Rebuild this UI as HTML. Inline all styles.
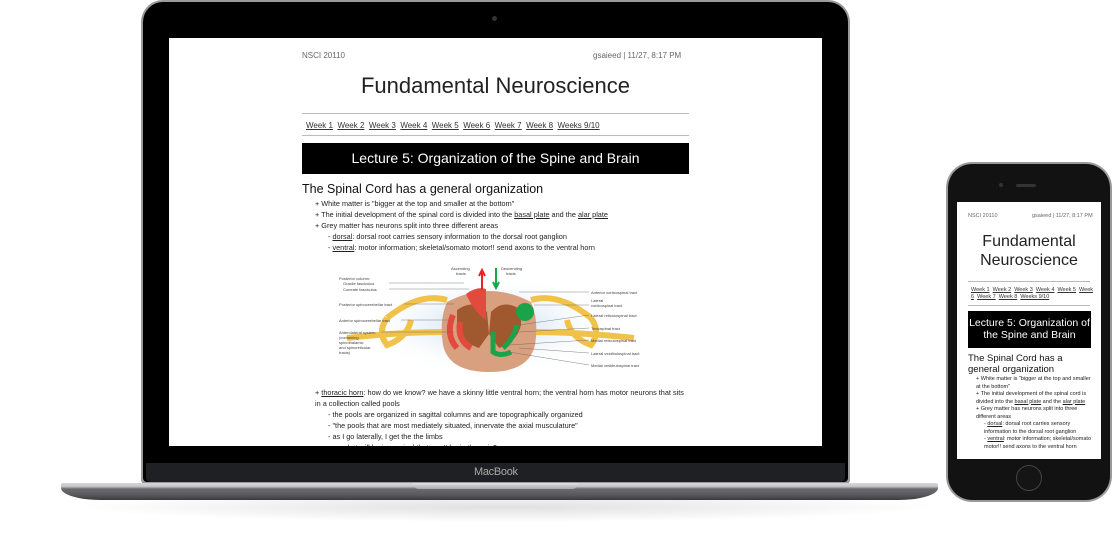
<!DOCTYPE html>
<html><head><meta charset="utf-8"><style>
*{margin:0;padding:0;box-sizing:border-box}
body{width:1113px;height:555px;background:#fff;position:relative;overflow:hidden;font-family:"Liberation Sans",sans-serif;color:#222}
.a{position:absolute}
.t{position:absolute;white-space:nowrap}
u{text-decoration:underline}
</style></head><body>
<!-- laptop shadow -->
<div class="a" style="left:70px;top:492px;width:870px;height:30px;background:radial-gradient(ellipse at center,rgba(0,0,0,.12),rgba(0,0,0,0) 70%)"></div>
<!-- lid -->
<div class="a" style="left:141px;top:0;width:709px;height:484px;background:#9a9a9c;border-radius:22px 22px 4px 4px"></div>
<div class="a" style="left:143px;top:2px;width:705px;height:480px;background:#000;border-radius:20px 20px 4px 4px"></div>
<div class="a" style="left:146px;top:463px;width:699px;height:19px;background:#1f2023;border-radius:0 0 5px 5px"></div>
<div class="t" style="left:474px;top:466px;font-size:11px;color:#aaa;letter-spacing:-.3px">MacBook</div>
<div class="a" style="left:492px;top:16px;width:5px;height:5px;border-radius:50%;background:#333"></div>
<!-- base -->
<div class="a" style="left:61px;top:483px;width:877px;height:17px;border-radius:2px 2px 40px 40px/2px 2px 12px 12px;background:linear-gradient(#d6d6d8 0,#c7c7c9 20%,#6a6a6d 35%,#5a5a5d 70%,#3a3a3c 100%)"></div>
<div class="a" style="left:413px;top:483px;width:165px;height:6px;background:linear-gradient(#e4e4e6,#a8a8aa);border-radius:0 0 6px 6px"></div>
<!-- screen -->
<div class="a" style="left:169px;top:38px;width:653px;height:408px;background:#fff;overflow:hidden">
 <div class="t" style="left:133px;top:13px;font-size:8px;color:#666">NSCI 20110</div>
 <div class="t" style="left:424px;top:13px;font-size:8px;color:#666">gsaieed | 11/27, 8:17 PM</div>
 <div class="t" style="left:133px;top:35px;width:387px;text-align:center;font-size:22px;color:#222">Fundamental Neuroscience</div>
 <div class="a" style="left:133px;top:75px;width:387px;height:1px;background:#bbb"></div>
 <div class="t" style="left:137px;top:83px;font-size:8px;word-spacing:0;color:#333"><u>Week 1</u>&nbsp; <u>Week 2</u>&nbsp; <u>Week 3</u>&nbsp; <u>Week 4</u>&nbsp; <u>Week 5</u>&nbsp; <u>Week 6</u>&nbsp; <u>Week 7</u>&nbsp; <u>Week 8</u>&nbsp; <u>Weeks 9/10</u></div>
 <div class="a" style="left:133px;top:97px;width:387px;height:1px;background:#bbb"></div>
 <div class="a" style="left:133px;top:105px;width:387px;height:31px;background:#000;color:#fff;font-size:14px;text-align:center;line-height:31px">Lecture 5: Organization of the Spine and Brain</div>
 <div class="t" style="left:133px;top:144px;font-size:12.5px;color:#111">The Spinal Cord has a general organization</div>
 <div style="position:absolute;left:146px;top:160px;font-size:7.3px;line-height:11px;color:#222">
  <div>+ White matter is "bigger at the top and smaller at the bottom"</div>
  <div>+ The initial development of the spinal cord is divided into the <u>basal plate</u> and the <u>alar plate</u></div>
  <div>+ Grey matter has neurons split into three different areas</div>
  <div style="padding-left:13px">- <u>dorsal</u>: dorsal root carries sensory information to the dorsal root ganglion</div>
  <div style="padding-left:13px">- <u>ventral</u>: motor information; skeletal/somato motor!! send axons to the ventral horn</div>
 </div>
 <!-- diagram -->
 <svg class="a" style="left:160px;top:222px" width="330" height="120" viewBox="0 0 330 120">
  <defs><radialGradient id="bg" cx=".5" cy=".5" r=".5"><stop offset="0" stop-color="#bcd6ee"/><stop offset="1" stop-color="#fff" stop-opacity="0"/></radialGradient></defs>
  <ellipse cx="160" cy="65" rx="130" ry="50" fill="url(#bg)"/>
  <path d="M58 58 Q90 32 118 40 M58 58 Q48 72 58 85 Q78 78 82 60 M18 78 Q70 72 118 72 M202 40 Q230 32 262 58 M262 58 Q272 72 262 85 Q242 78 238 60 M202 72 Q250 72 305 78" stroke="#f1c24a" stroke-width="6" fill="none"/>
  <path d="M118 42 Q160 20 202 42 Q210 60 206 85 Q200 112 160 112 Q120 112 114 85 Q110 60 118 42 Z" fill="#d9a07f"/>
  <path d="M128 50 Q145 38 158 52 L160 74 L150 88 Q132 82 128 65Z M192 50 Q175 38 162 52 L160 74 L170 88 Q188 82 192 65Z" fill="#a0582f"/>
  <path d="M137 34 Q148 26 157 29 L157 60 Q145 52 137 34Z" fill="#e24a3e"/>
  <path d="M124 55 Q116 75 128 88 M131 62 Q128 80 142 88" stroke="#e24a3e" stroke-width="6" fill="none"/>
  <circle cx="196" cy="52" r="9" fill="#1ba34a"/>
  <path d="M188 65 Q184 80 174 88 M164 72 L164 92 Q172 97 182 92" stroke="#1ba34a" stroke-width="5" fill="none"/>
  <path d="M153 12 L153 30 M150 16 L153 10 L156 16" stroke="#e22" stroke-width="2" fill="none"/>
  <path d="M167 8 L167 26 M164 22 L167 28 L170 22" stroke="#1a4" stroke-width="2" fill="none"/>
  <g font-size="4" fill="#444" font-family="Liberation Sans,sans-serif">
   <text x="122" y="10">Ascending</text><text x="127" y="15">tracts</text>
   <text x="172" y="10">Descending</text><text x="177" y="15">tracts</text>
   <text x="10" y="20">Posterior column:</text><text x="14" y="25">Gracile fasciculus</text><text x="14" y="31">Cuneate fasciculus</text>
   <text x="10" y="46">Posterior spinocerebellar tract</text><text x="10" y="62">Anterior spinocerebellar tract</text>
   <text x="10" y="74">Anterolateral system</text><text x="10" y="79">(containing</text><text x="10" y="84">spinothalamic</text><text x="10" y="89">and spinoreticular</text><text x="10" y="94">tracts)</text>
   <text x="262" y="34">Anterior corticospinal tract</text><text x="262" y="42">Lateral</text><text x="262" y="47">corticospinal tract</text>
   <text x="262" y="57">Lateral reticulospinal tract</text><text x="262" y="70">Tectospinal tract</text>
   <text x="262" y="82">Medial reticulospinal tract</text><text x="262" y="95">Lateral vestibulospinal tract</text><text x="262" y="107">Medial vestibulospinal tract</text>
  </g>
  <path d="M60 23 L135 23 M60 29 L140 29 M75 44 L125 44 M72 60 L120 60 M52 72 L125 72 M260 32 L190 32 M260 45 L205 45 M260 55 L190 65 M260 68 L190 72 M260 80 L180 85 M260 93 L190 88 M260 105 L180 92" stroke="#666" stroke-width=".4"/>
 </svg>
 <div style="position:absolute;left:146px;top:349px;width:380px;font-size:7.3px;line-height:11px;color:#222">
  <div>+ <u>thoracic horn</u>: how do we know? we have a skinny little ventral horn; the ventral horn has motor neurons that sits</div>
  <div>in a collection called pools</div>
  <div style="padding-left:13px">- the pools are organized in sagittal columns and are topographically organized</div>
  <div style="padding-left:13px">- "the pools that are most mediately situated, innervate the axial musculature"</div>
  <div style="padding-left:13px">- as I go laterally, I get the the limbs</div>
  <div style="padding-left:13px">- so what will be in cervical that won't be in thoracic?</div>
 </div>
</div>
<!-- phone -->
<div class="a" style="left:946px;top:162px;width:166px;height:340px;border-radius:26px;background:#9a9a9c"></div>
<div class="a" style="left:948px;top:164px;width:162px;height:336px;border-radius:24px;background:#121212"></div>
<div class="a" style="left:999px;top:183px;width:4px;height:4px;border-radius:50%;background:#333"></div>
<div class="a" style="left:1016px;top:184px;width:20px;height:3px;border-radius:2px;background:#333"></div>
<div class="a" style="left:1016px;top:465px;width:26px;height:26px;border-radius:50%;border:1px solid #444;background:#151515"></div>
<div class="a" style="left:957px;top:202px;width:144px;height:257px;background:#fff;overflow:hidden">
 <div class="t" style="left:11px;top:11px;font-size:5.5px;color:#666">NSCI 20110</div>
 <div class="t" style="left:75px;top:11px;font-size:5.5px;color:#666">gsaieed | 11/27, 8:17 PM</div>
 <div class="a" style="left:6px;top:30px;width:132px;text-align:center;font-size:16px;line-height:19px;color:#222">Fundamental Neuroscience</div>
 <div class="a" style="left:11px;top:79px;width:122px;height:1px;background:#bbb"></div>
 <div class="a" style="left:14px;top:85px;width:122px;font-size:5.5px;line-height:6.5px;color:#333"><u>Week 1</u>&nbsp; <u>Week 2</u>&nbsp; <u>Week 3</u>&nbsp; <u>Week 4</u>&nbsp; <u>Week 5</u>&nbsp; <u>Week 6</u>&nbsp; <u>Week 7</u>&nbsp; <u>Week 8</u>&nbsp; <u>Weeks 9/10</u></div>
 <div class="a" style="left:11px;top:103px;width:122px;height:1px;background:#bbb"></div>
 <div class="a" style="left:11px;top:109px;width:123px;height:37px;background:#000;color:#fff;font-size:10.5px;line-height:12px;text-align:center;padding-top:6px">Lecture 5: Organization of the Spine and Brain</div>
 <div class="a" style="left:11px;top:151px;width:125px;font-size:9.5px;line-height:11px;color:#111">The Spinal Cord has a general organization</div>
 <div class="a" style="left:19px;top:174px;width:118px;font-size:5.5px;line-height:7.5px;color:#222">
  <div>+ White matter is "bigger at the top and smaller at the bottom"</div>
  <div>+ The initial development of the spinal cord is divided into the <u>basal plate</u> and the <u>alar plate</u></div>
  <div>+ Grey matter has neurons split into three different areas</div>
  <div style="padding-left:8px">- <u>dorsal</u>: dorsal root carries sensory information to the dorsal root ganglion</div>
  <div style="padding-left:8px">- <u>ventral</u>: motor information; skeletal/somato motor!! send axons to the ventral horn</div>
 </div>
</div>
</body></html>
